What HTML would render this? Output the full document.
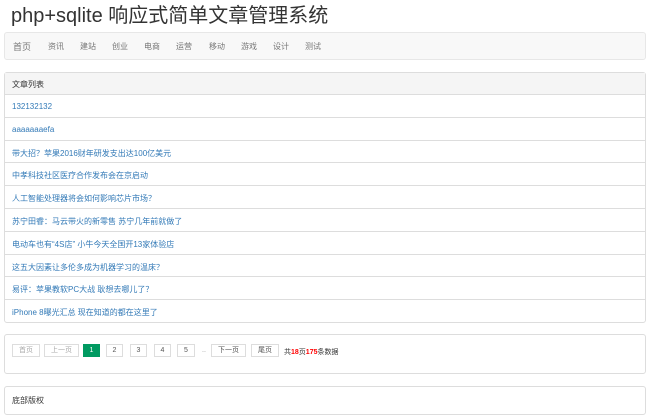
<!DOCTYPE html>
<html><head><meta charset="utf-8"><style>
*{box-sizing:border-box;margin:0;padding:0}
body{width:650px;height:417px;overflow:hidden;background:#fff;font-family:"Liberation Sans","Noto Sans CJK SC",sans-serif;font-size:8px;color:#333;position:relative}
.a{position:absolute}
h1{position:absolute;left:11px;top:3px;font-size:20px;font-weight:normal;color:#333;line-height:26px}
.nav{left:4px;top:32px;width:642px;height:28px;background:#f8f8f8;border:1px solid #e7e7e7;border-radius:3px}
.nav span{position:absolute;top:8px;color:#777;font-size:8px}
.panel{left:4px;top:72px;width:642px;height:251px;border:1px solid #ddd;border-radius:3px}
.ph{height:22px;background:#f5f5f5;border-bottom:1px solid #ddd;padding:6px 7px;font-size:8px;color:#333}
.row{height:22.8px;border-bottom:1px solid #ddd;padding:7px 7px 0;color:#337ab7;font-size:8px}
.row:last-child{border-bottom:none}
.pg{left:4px;top:334px;width:642px;height:40px;border:1px solid #ddd;border-radius:3px}
.b{position:absolute;top:9px;height:13px;border:1px solid #ddd;font-size:7px;line-height:11px;text-align:center;color:#555;background:#fff}
.ft{left:4px;top:386px;width:642px;height:29px;border:1px solid #ddd;border-radius:3px;padding:8px 7px;font-size:8px}
</style></head><body>
<h1>php+sqlite 响应式简单文章管理系统</h1>
<div class="a nav">
<span style="left:8px;font-size:9px;top:7px">首页</span><span style="left:43px">资讯</span><span style="left:75px">建站</span><span style="left:107px">创业</span><span style="left:139px">电商</span><span style="left:171px">运营</span><span style="left:204px">移动</span><span style="left:236px">游戏</span><span style="left:268px">设计</span><span style="left:300px">测试</span>
</div>
<div class="a panel">
<div class="ph">文章列表</div>
<div class="row">132132132</div>
<div class="row">aaaaaaaefa</div>
<div class="row">带大招？苹果2016财年研发支出达100亿美元</div>
<div class="row">中孝科技社区医疗合作发布会在京启动</div>
<div class="row">人工智能处理器将会如何影响芯片市场？</div>
<div class="row">苏宁田睿：马云带火的新零售 苏宁几年前就做了</div>
<div class="row">电动车也有“4S店” 小牛今天全国开13家体验店</div>
<div class="row">这五大因素让多伦多成为机器学习的温床？</div>
<div class="row">易评：苹果教软PC大战 耿想去哪儿了？</div>
<div class="row">iPhone 8曝光汇总 现在知道的都在这里了</div>
</div>
<div class="a pg">
<div class="b" style="left:7px;width:28px;color:#aaa">首页</div>
<div class="b" style="left:39px;width:35px;color:#aaa">上一页</div>
<div class="b" style="left:78px;width:17px;background:#009a61;border-color:#009a61;color:#fff">1</div>
<div class="b" style="left:101px;width:17px">2</div>
<div class="b" style="left:125px;width:17px">3</div>
<div class="b" style="left:149px;width:17px">4</div>
<div class="b" style="left:172px;width:18px">5</div>
<span class="a" style="left:197px;top:12px;color:#999;font-size:7px">..</span>
<div class="b" style="left:206px;width:35px">下一页</div>
<div class="b" style="left:246px;width:28px">尾页</div>
<span class="a" style="left:279px;top:12px;font-size:7px">共<b style="color:#f00">18</b>页<b style="color:#f00">175</b>条数据</span>
</div>
<div class="a ft">底部版权</div>
</body></html>
